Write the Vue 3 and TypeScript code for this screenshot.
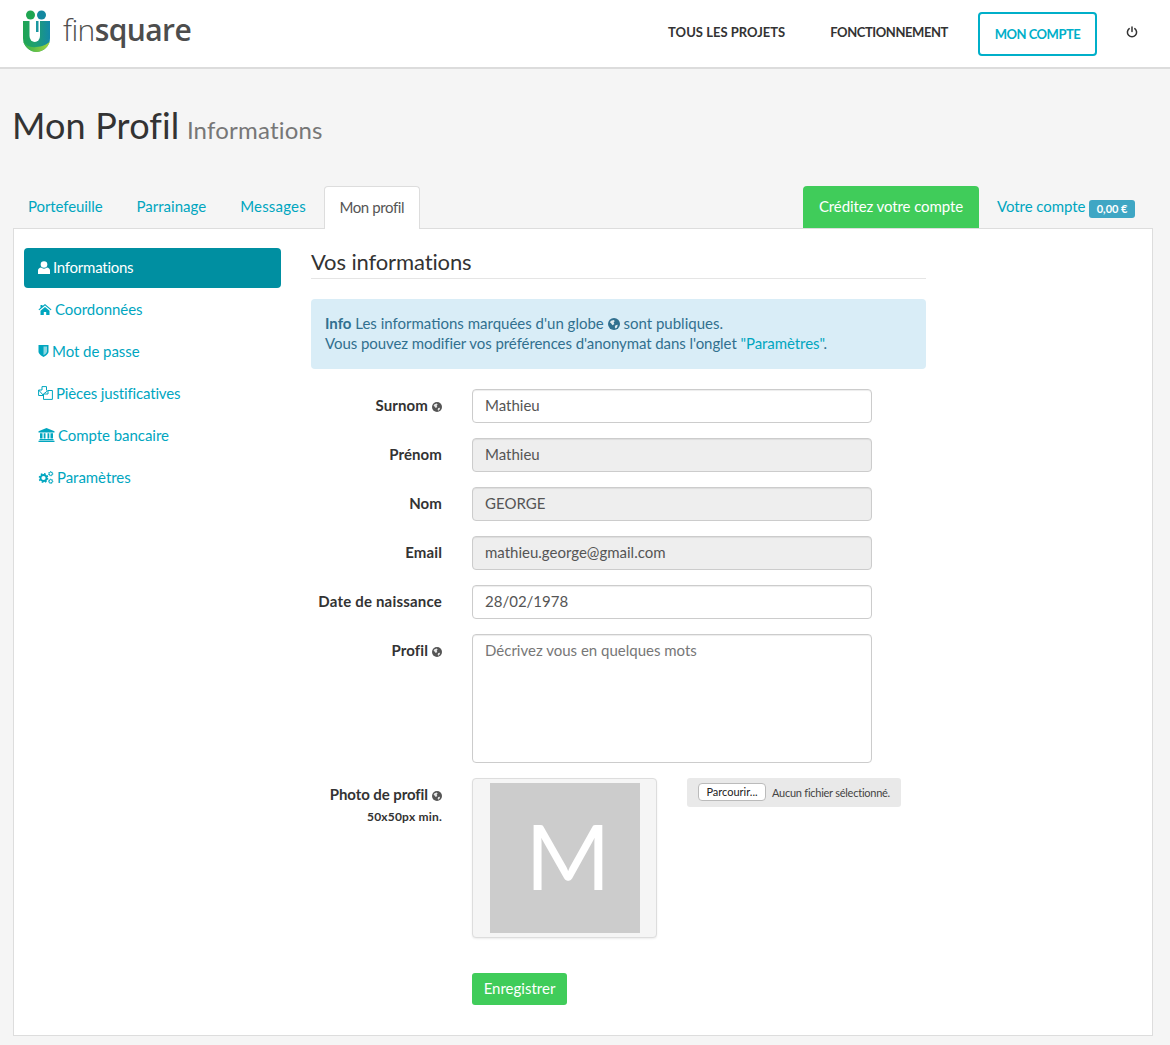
<script setup lang="ts">
const tabs = ['Portefeuille', 'Parrainage', 'Messages']
const side = [
  { k: 'user', t: 'Informations', active: true },
  { k: 'home', t: 'Coordonnées' },
  { k: 'shield', t: 'Mot de passe' },
  { k: 'files', t: 'Pièces justificatives' },
  { k: 'bank', t: 'Compte bancaire' },
  { k: 'cogs', t: 'Paramètres' },
]
const fields = [
  { l: 'Surnom', v: 'Mathieu', globe: true, dis: false, wide: false },
  { l: 'Prénom', v: 'Mathieu', globe: false, dis: true, wide: false },
  { l: 'Nom', v: 'GEORGE', globe: false, dis: true, wide: false },
  { l: 'Email', v: 'mathieu.george@gmail.com', globe: false, dis: true, wide: false },
  { l: 'Date de naissance', v: '28/02/1978', globe: false, dis: false, wide: true },
]
</script>

<template>
  <div class="page">
    <svg width="0" height="0" class="defs">
      <defs>
        <symbol id="globe" viewBox="0 0 16 16">
          <circle cx="8" cy="8" r="8" fill="currentColor" />
          <path d="M4 3.500 7.500 2.500 9 4 7.500 6 8.500 8 6 9.500 4 7 2.500 5.500ZM10 9.500 13 9 12 12.500 10 14 9 12Z" fill="#fff" opacity=".85" />
        </symbol>
        <symbol id="gear" viewBox="0 0 10 10">
          <circle cx="5" cy="5" r="3" fill="none" stroke="currentColor" stroke-width="1.800" />
          <circle cx="5" cy="5" r="4.200" fill="none" stroke="currentColor" stroke-width="1.600" stroke-dasharray="1.650 1.650" />
        </symbol>
      </defs>
    </svg>
    <header class="top">
      <div class="logo">
        <svg width="28" height="42" viewBox="0 0 28 42" class="mark">
          <defs>
            <linearGradient id="lg" x1="0" y1="0" x2="1" y2="0">
              <stop offset="0" stop-color="#1fa552" />
              <stop offset=".45" stop-color="#1fa070" />
              <stop offset="1" stop-color="#1388a8" />
            </linearGradient>
            <linearGradient id="lg2" x1="0" y1="0" x2="1" y2="0">
              <stop offset="0" stop-color="#2dae4f" />
              <stop offset="1" stop-color="#a6d63c" />
            </linearGradient>
          </defs>
          <circle cx="7.500" cy="5" r="4.500" fill="#1fa552" />
          <circle cx="18.500" cy="5" r="4.500" fill="#1388a0" />
          <path d="M0 11H27V28a13.500 13.800 0 0 1-27 0Z" fill="url(#lg)" />
          <path d="M6.500 11H17V26a5.250 6 0 0 1-10.500 0Z" fill="#fff" />
          <path d="M13 11H15.500V22H13Z" fill="#1b97a0" />
          <path d="M0 31C3 36 8 38 13 37 19 36.500 24 35 27 31 25 38 19 42 13.500 42 7 42 2 37 0 31Z" fill="url(#lg2)" />
        </svg>
        <span class="word"><span class="thin">fin</span><span class="bold">square</span></span>
      </div>
      <nav class="nav">
        <a class="navlink l1">TOUS LES PROJETS</a>
        <a class="navlink l2">FONCTIONNEMENT</a>
        <a class="cta">MON COMPTE</a>
        <svg class="power" width="12" height="12" viewBox="0 0 12 12">
          <path d="M3.200 2.600a4.600 4.600 0 1 0 5.600 0" fill="none" stroke="#333" stroke-width="1.500" stroke-linecap="round" />
          <path d="M6 1v4.500" fill="none" stroke="#333" stroke-width="1.500" stroke-linecap="round" />
        </svg>
      </nav>
    </header>

    <main class="wrap">
      <h1 class="title">Mon Profil <small>Informations</small></h1>

      <div class="tabs">
        <a v-for="t in tabs" :key="t" class="tab">{{ t }}</a>
        <a class="tab on">Mon profil</a>
        <div class="spacer"></div>
        <a class="credit">Créditez votre compte</a>
        <a class="tab acct">Votre compte <span class="badge">0,00 €</span></a>
      </div>

      <section class="panel">
        <aside class="side">
          <a v-for="s in side" :key="s.t" class="item" :class="[s.k, { active: s.active }]">
            <svg v-if="s.k === 'user'" class="ic" width="12" height="13" viewBox="0 0 12 13"><circle cx="6" cy="3.500" r="3.300" fill="currentColor" /><path d="M0 13V9.500C0 7.800 1.500 6.800 3 6.500 4.500 8 7.500 8 9 6.500 10.500 6.800 12 7.800 12 9.500V13Z" fill="currentColor" /></svg>
            <svg v-else-if="s.k === 'home'" class="ic" width="14" height="11" viewBox="0 0 13 11"><path d="M6.500 0 13 5.500 12.300 6.300 6.500 1.500.7 6.300 0 5.500 2 3.800V1H4V2.100ZM2 6.700 6.500 3 11 6.700V11H7.700V8H5.300V11H2Z" fill="currentColor" /></svg>
            <svg v-else-if="s.k === 'shield'" class="ic" width="11" height="12" viewBox="0 0 10 12"><path d="M0 0H10V6.500C10 9 7 11 5 12 3 11 0 9 0 6.500Z" fill="currentColor" /><path d="M5 1.500H8.500V6.500C8.500 8 6.500 9.500 5 10.300Z" fill="#fff" opacity=".55" /></svg>
            <svg v-else-if="s.k === 'files'" class="ic" width="15" height="14" viewBox="0 0 15 14"><path d="M4 .6H8.500V4.500M5.500 9.500H.6V4ZM4 .6V4H.6" fill="none" stroke="currentColor" stroke-width="1" stroke-linejoin="round" /><path d="M10 4.500H14.400V13.400H5.500V8ZM10 4.500V8H5.500" fill="none" stroke="currentColor" stroke-width="1" stroke-linejoin="round" /></svg>
            <svg v-else-if="s.k === 'bank'" class="ic" width="17" height="14" viewBox="0 0 16 14"><path d="M8 0 16 3.200V4.500H0V3.200ZM1.500 5.300H4V10.500H1.500ZM5.200 5.300H7V10.500H5.200ZM9 5.300H10.800V10.500H9ZM12 5.300H14.500V10.500H12ZM1 11H15V12.300H1ZM0 12.700H16V14H0Z" fill="currentColor" /></svg>
            <svg v-else class="ic gearic" width="16" height="13" viewBox="0 0 15 13"><use href="#gear" x="0" y="2" width="10" height="10" /><use href="#gear" x="9.500" y="0" width="5.500" height="5.500" /><use href="#gear" x="9.500" y="7.500" width="5.500" height="5.500" /></svg>
            <span class="lbl">{{ s.t }}</span>
          </a>
        </aside>

        <div class="content">
          <h3 class="h3">Vos informations</h3>
          <div class="alert">
            <b>Info</b> Les informations marquées d'un globe
            <svg class="gl" width="12" height="12"><use href="#globe" /></svg> sont publiques.<br />
            <span class="tight">Vous pouvez modifier vos préférences d'anonymat dans l'onglet <a class="link">"Paramètres"</a>.</span>
          </div>

          <form class="form" @submit.prevent>
            <div v-for="f in fields" :key="f.l" class="row">
              <label class="label" :class="{ wide: f.wide }">{{ f.l }}<svg v-if="f.globe" class="lg" width="10" height="10"><use href="#globe" /></svg></label>
              <input class="ctl line" :class="{ dis: f.dis }" :value="f.v" :disabled="f.dis" />
            </div>
            <div class="row">
              <label class="label">Profil<svg class="lg" width="10" height="10"><use href="#globe" /></svg></label>
              <textarea class="ctl area" placeholder="Décrivez vous en quelques mots"></textarea>
            </div>
            <div class="row photo">
              <label class="label ph"><span>Photo de profil<svg class="lg" width="10" height="10"><use href="#globe" /></svg></span><small>50x50px min.</small></label>
              <div class="thumb"><div class="avatar">M</div></div>
              <div class="file"><span class="browse">Parcourir...</span><span class="none">Aucun fichier sélectionné.</span></div>
            </div>
            <div class="row save">
              <span></span>
              <button class="btn" type="button">Enregistrer</button>
            </div>
          </form>
        </div>
      </section>
    </main>
  </div>
</template>

<style>
html, body { margin: 0; background: #f5f5f5; }
</style>

<style scoped>
.page { font-family: "Lato", "Liberation Sans", sans-serif; font-size: 15px; color: #333; background: #f5f5f5; height: 1045px; overflow: hidden; }
.defs { position: absolute; }
.top { height: 67px; background: #fff; border-bottom: 2px solid #dcdcdc; display: flex; justify-content: space-between; }
.logo { display: flex; align-items: flex-start; padding: 10px 0 0 23px; }
.mark { display: block; }
.word { font-family: "Open Sans", sans-serif; font-size: 30px; line-height: 40px; color: #4d4d4d; margin-left: 12px; letter-spacing: -0.6px; }
.thin { font-weight: 300; }
.bold { font-weight: 600; }
.nav { display: flex; align-items: flex-start; }
.navlink { font-size: 13px; font-weight: 700; color: #333; line-height: 16px; margin-top: 24px; }
.l1 { margin-right: 45px; letter-spacing: 0.02px; }
.l2 { margin-right: 30px; letter-spacing: -0.42px; }
.cta { margin-top: 12px; width: 119px; height: 44px; box-sizing: border-box; border: 2px solid #00afc9; border-radius: 4px; color: #00afc9; font-size: 13px; font-weight: 700; letter-spacing: -0.5px; display: flex; align-items: center; justify-content: center; margin-right: 29px; }
.power { margin: 26px 32px 0 0; }
.wrap { padding: 0 17px 0 13px; }
.title { margin: 34px 0 39px -1px; font-size: 36px; font-weight: 400; line-height: 44px; color: #333; height: 44px; letter-spacing: .15px; }
.title small { font-size: 24px; color: #777; margin-left: -2px; letter-spacing: .2px; }
.tabs { display: flex; height: 42px; align-items: stretch; }
.tab { color: #00a6bf; padding: 0 16px; margin-right: 2px; line-height: 41px; letter-spacing: -0.1px; }
.tab:first-child { padding-left: 15px; }
.tab:nth-child(2) { letter-spacing: 0.02px; }
.tab:nth-child(3) { letter-spacing: 0.2px; }
.tab.on { box-sizing: border-box; width: 96px; color: #555; background: #fff; border: 1px solid #ddd; border-bottom: 0; border-radius: 4px 4px 0 0; margin-bottom: -1px; line-height: 41px; height: 43px; z-index: 1; padding: 0 15px 0 14.500px; position: relative; letter-spacing: -0.4px; white-space: nowrap; }
.spacer { flex: 1; }
.credit { background: #40cc5a; color: #fff; padding: 0 16px; line-height: 41px; border-radius: 4px 4px 0 0; letter-spacing: -0.1px; }
.acct { margin: 0 18px 0 18px; padding: 0; letter-spacing: -0.06px; }
.badge { display: inline-block; background: #3fa6c4; color: #fff; font-size: 11px; font-weight: 700; line-height: 18px; padding: 0 7.500px; border-radius: 3px; vertical-align: -1px; margin-left: 0; letter-spacing: 0; }
.panel { background: #fff; border: 1px solid #ddd; box-sizing: border-box; padding: 19px 10px 0; display: flex; gap: 30px; height: 808px; }
.side { width: 257px; display: flex; flex-direction: column; gap: 2px; }
.item { height: 40px; box-sizing: border-box; padding: 0 0 2px 14px; display: flex; align-items: center; color: #00a6bf; border-radius: 4px; letter-spacing: -0.05px; }
.item.active { background: #008fa1; color: #fff; letter-spacing: -0.25px; }
.item.files .lbl { letter-spacing: -0.15px; }
.ic { flex: none; margin-right: 3px; }
.content { width: 615px; }
.h3 { margin: 0; font-size: 22px; font-weight: 400; line-height: 28px; height: 30px; border-bottom: 1px solid #e5e5e5; color: #333; letter-spacing: -0.12px; }
.alert { margin-top: 20px; background: #d9edf7; color: #31708f; height: 70px; box-sizing: border-box; padding: 14px 14px; line-height: 20px; border-radius: 4px; }
.tight { letter-spacing: -0.07px; }
.link { color: #00a6bf; }
.gl { vertical-align: -1px; }
.form { margin-top: 20px; display: flex; flex-direction: column; gap: 15px; }
.row { display: grid; grid-template-columns: 131px 400px; column-gap: 30px; }
.label { font-weight: 700; font-size: 15px; color: #333; text-align: right; line-height: 33px; white-space: nowrap; letter-spacing: .1px; }
.label.wide { letter-spacing: .2px; }
.lg { margin-left: 4px; vertical-align: -1px; color: #555; }
.ctl { box-sizing: border-box; width: 400px; height: 34px; border: 1px solid #ccc; border-radius: 4px; padding: 6px 12px; font: 15px "Lato", sans-serif; color: #555; background: #fff; box-shadow: inset 0 1px 1px rgba(0, 0, 0, .075); outline: 0; }
.ctl.line { padding: 5px 12px 7px; }
.ctl.dis { background: #eee; opacity: 1; }
.area { height: 129px; resize: none; display: block; }
.area::placeholder { color: #777; opacity: 1; }
.photo { grid-template-columns: 131px 185px 214px; height: 160px; }
.ph { display: flex; flex-direction: column; line-height: 33px; letter-spacing: -0.08px; }
.ph small { font-size: 12px; line-height: 14px; margin-top: -1px; letter-spacing: .2px; }
.thumb { box-sizing: border-box; width: 185px; height: 160px; background: #f5f5f5; border: 1px solid #ddd; border-radius: 4px; padding: 4px 0 0 17px; box-shadow: 0 1px 2px rgba(0, 0, 0, .075); }
.avatar { width: 150px; height: 150px; background: #ccc; color: #fff; font-size: 92px; line-height: 143px; text-align: center; text-indent: 6px; overflow: hidden; }
.file { box-sizing: border-box; width: 214px; height: 29px; background: #e9e9e9; border-radius: 3px; display: flex; align-items: center; padding: 0 0 1px 11px; font-size: 11px; color: #444; }
.browse { box-sizing: border-box; width: 68px; height: 18px; background: #fff; border: 1px solid #bbb; border-radius: 4px; text-align: center; line-height: 16px; color: #222; margin-right: 6px; }
.none { letter-spacing: -0.25px; }
.save { margin-top: 20px; }
.btn { width: 95px; height: 32px; background: #40cc5a; color: #fff; border: 0; border-radius: 3px; font: 15px "Lato", sans-serif; padding: 0 0 2px; }
</style>
